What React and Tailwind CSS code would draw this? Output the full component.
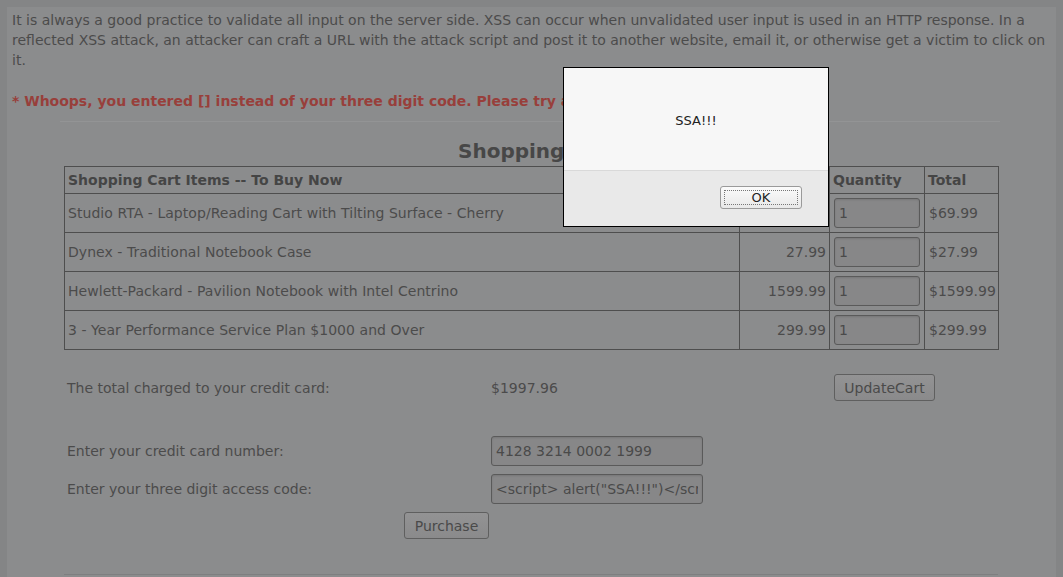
import React from 'react'

const items = [
  { id: 1, name: 'Studio RTA - Laptop/Reading Cart with Tilting Surface - Cherry', price: '69.99', qty: '1', total: '$69.99' },
  { id: 2, name: 'Dynex - Traditional Notebook Case', price: '27.99', qty: '1', total: '$27.99' },
  { id: 3, name: 'Hewlett-Packard - Pavilion Notebook with Intel Centrino', price: '1599.99', qty: '1', total: '$1599.99' },
  { id: 4, name: '3 - Year Performance Service Plan $1000 and Over', price: '299.99', qty: '1', total: '$299.99' },
]

const inputClass =
  'h-[30px] rounded-[3px] border border-[#5a5a5a] bg-[#878788] px-[4px] text-[14px] text-[#4a4a4a] shadow-[inset_0_1px_2px_rgba(0,0,0,0.12)] outline-none'

const buttonClass =
  'h-[27px] rounded-[3px] border border-[#5f5f5f] bg-gradient-to-b from-[#939394] to-[#8a8a8b] text-[14px] text-[#4a4a4a]'

const AlertDialog = () => (
  <div className="absolute left-[563px] top-[67px] flex h-[160px] w-[266px] flex-col border border-black bg-[#f7f7f7] font-['DejaVu_Sans',sans-serif]">
    <div className="flex h-[102px] items-center justify-center pt-[3px] text-[13px] text-[#222]">SSA!!!</div>
    <div className="flex flex-1 items-start justify-end border-t border-[#d9d9d9] bg-[#e9e9e9] pr-[26px] pt-[15px]">
      <button className="flex h-[23px] w-[82px] items-center justify-center rounded-[3px] border border-[#9a9a9a] bg-gradient-to-b from-[#fbfbfb] to-[#e8e8e8] p-[3px]">
        <span className="flex h-full w-full items-center justify-center border border-dotted border-[#777] text-[13px] text-[#222]">
          OK
        </span>
      </button>
    </div>
  </div>
)

export default function App() {
  return (
    <div className="relative min-h-[577px] bg-[#848586] pl-[7px] pr-[7px] pt-[7px] font-['DejaVu_Sans',sans-serif]">
      <div className="min-h-[570px] bg-[#8b8c8d] pl-[5px] pr-[10px] pt-[3px] text-[14px] leading-[20px] text-[#4b4b4b]">
        <p>
          It is always a good practice to validate all input on the server side. XSS can occur when unvalidated user
          input is used in an HTTP response. In a reflected XSS attack, an attacker can craft a URL with the attack
          script and post it to another website, email it, or otherwise get a victim to click on it.
        </p>
        <p className="mt-[21px] font-bold text-[#983f3b]">
          * Whoops, you entered [] instead of your three digit code. Please try again.
        </p>

        <div className="ml-[48px] mt-[10px] w-[940px] border-t border-[#939495]" />

        <div className="ml-[52px] w-[934px]">
          <h2 className="mt-[17px] pl-[15px] text-center text-[20px] font-bold leading-[24px] text-[#474747]">
            Shopping Cart
          </h2>

          <table className="mt-[3px] w-[934px] table-fixed border-collapse border border-[#4e4e4e]">
            <colgroup>
              <col className="w-[675px]" />
              <col className="w-[90px]" />
              <col className="w-[95px]" />
              <col className="w-[74px]" />
            </colgroup>
            <thead>
              <tr>
                <th className="border border-[#4e4e4e] py-[3px] pl-[3px] text-left font-bold text-[#454545]">
                  Shopping Cart Items -- To Buy Now
                </th>
                <th className="border border-[#4e4e4e] py-[3px] pl-[3px] text-left font-bold text-[#454545]">Price</th>
                <th className="border border-[#4e4e4e] py-[3px] pl-[3px] text-left font-bold text-[#454545]">
                  Quantity
                </th>
                <th className="border border-[#4e4e4e] py-[3px] pl-[3px] text-left font-bold text-[#454545]">Total</th>
              </tr>
            </thead>
            <tbody>
              {items.map((item) => (
                <tr key={item.id}>
                  <td className="border border-[#4e4e4e] py-[4px] pl-[3px] tracking-[0.05px]">{item.name}</td>
                  <td className="border border-[#4e4e4e] py-[4px] pr-[3px] text-right">{item.price}</td>
                  <td className="border border-[#4e4e4e] py-[4px] pl-[4px]">
                    <input readOnly value={item.qty} className={`${inputClass} block w-[86px]`} />
                  </td>
                  <td className="border border-[#4e4e4e] py-[4px] pl-[4px]">{item.total}</td>
                </tr>
              ))}
            </tbody>
          </table>

          <div className="mt-[24px] grid grid-cols-[427px_343px_auto] items-center">
            <span className="pl-[3px]">The total charged to your credit card:</span>
            <span>$1997.96</span>
            <button className={`${buttonClass} w-[101px]`}>UpdateCart</button>
          </div>

          <div className="mt-[35px] grid grid-cols-[427px_auto] items-center gap-y-[8px]">
            <span className="pl-[3px]">Enter your credit card number:</span>
            <input readOnly value="4128 3214 0002 1999" className={`${inputClass} w-[212px]`} />
            <span className="pl-[3px]">Enter your three digit access code:</span>
            <input readOnly value={'<script> alert("SSA!!!")</script>'} className={`${inputClass} w-[212px]`} />
          </div>

          <div className="mt-[8px] flex w-[765px] justify-center">
            <button className={`${buttonClass} w-[85px]`}>Purchase</button>
          </div>

          <div className="mt-[35px] w-[934px] border-t border-[#7e7f80]" />
        </div>
      </div>

      <AlertDialog />
    </div>
  )
}
